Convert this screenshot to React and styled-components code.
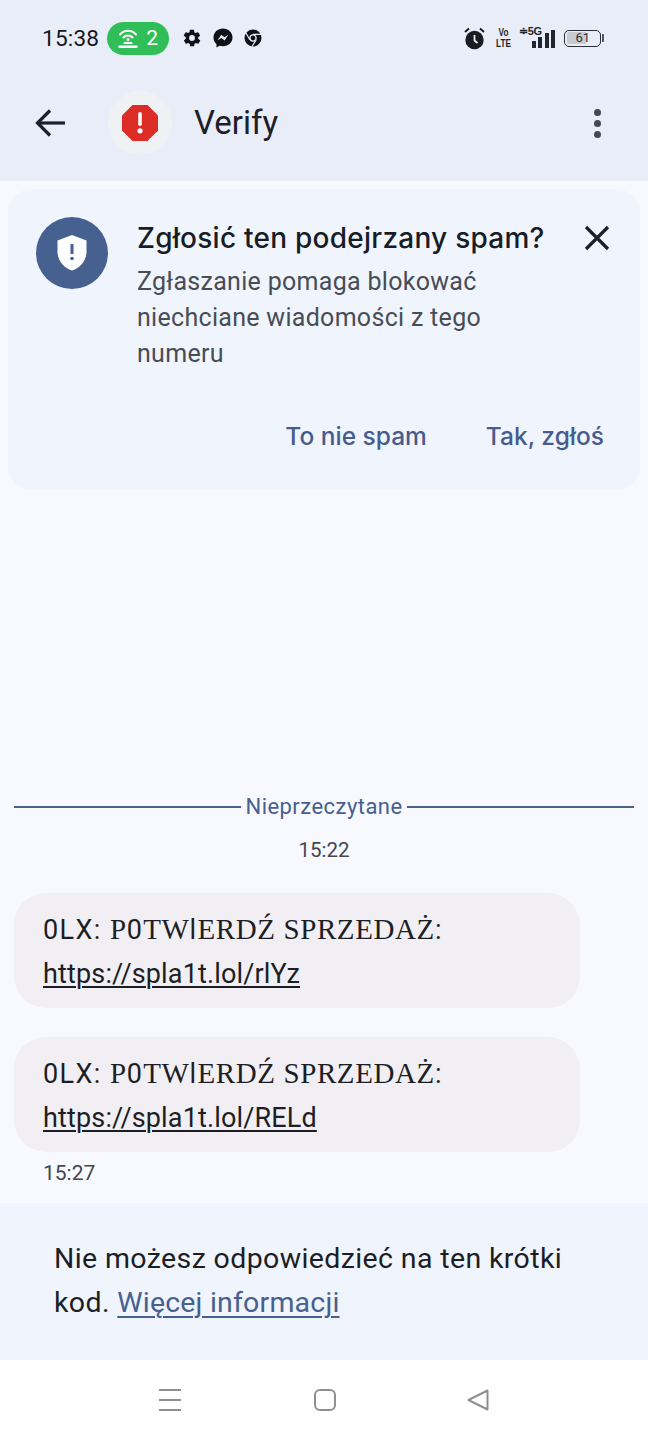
import React from 'react'
import styled, { createGlobalStyle } from 'styled-components'

const GlobalStyle = createGlobalStyle`
  html, body {
    margin: 0;
    padding: 0;
    background: #f7f9ff;
    font-family: 'Roboto', 'Liberation Sans', sans-serif;
  }
`

const Screen = styled.div`
  width: 648px;
  height: 1440px;
  display: flex;
  flex-direction: column;
  overflow: hidden;
  background: #f7f9ff;
`

const Head = styled.header`
  height: 181px;
  flex: none;
  background: #e9edf8;
  display: flex;
  flex-direction: column;
`

const StatusBar = styled.div`
  height: 76px;
  flex: none;
  display: flex;
  align-items: center;
  padding: 0 44px 0 42px;
  color: #14171c;
`

const Clock = styled.span`
  font-size: 22.6px;
  letter-spacing: 0.2px;
  margin-right: 8px;
`

const HotspotPill = styled.div`
  width: 62px;
  height: 33px;
  border-radius: 17px;
  background: #2fbe57;
  color: #fff;
  display: flex;
  align-items: center;
  justify-content: center;
  gap: 8px;
  font-size: 21px;
  margin-right: 13px;
`

const NotifIcons = styled.div`
  display: flex;
  align-items: center;
  gap: 11px;
`

const Spacer = styled.div`
  flex: 1;
`

const SysIcons = styled.div`
  display: flex;
  align-items: center;
`

const VoLte = styled.div`
  width: 14px;
  margin: 0 8px 0 12px;
  display: flex;
  justify-content: center;
  font-family: 'Liberation Sans', sans-serif;
  font-weight: 700;
  font-size: 10.5px;
  line-height: 11.5px;
  text-align: center;
  color: #22252b;
  & > span {
    flex: none;
    transform: scaleX(0.78);
  }
`

const Signal = styled.div`
  position: relative;
  width: 36px;
  height: 20px;
  margin-right: 9px;
  display: flex;
  align-items: flex-end;
  justify-content: flex-end;
  gap: 2.5px;
`

const SignalBar = styled.i`
  display: block;
  width: 4px;
  height: ${(p) => p.$h}px;
  background: #22252b;
`

const FiveG = styled.span`
  position: absolute;
  left: 0;
  top: -3px;
  font-family: 'Liberation Sans', sans-serif;
  font-weight: 700;
  font-size: 11px;
  letter-spacing: -0.3px;
  color: #22252b;
`

const Battery = styled.div`
  display: flex;
  align-items: center;
  gap: 1px;
`

const BatteryBody = styled.div`
  border: 1.5px solid #2c2f35;
  border-radius: 5px;
  padding: 1.5px;
  width: 32px;
  height: 12px;
  display: flex;
`

const BatteryFill = styled.div`
  width: 62%;
  background: #c9cbd0;
  border-radius: 2px 0 0 2px;
  font-size: 13px;
  line-height: 12px;
  color: #2c2f35;
  padding-left: 9px;
  box-sizing: border-box;
  white-space: nowrap;
`

const BatteryTip = styled.div`
  width: 2px;
  height: 8px;
  background: #55585e;
  border-radius: 0 1px 1px 0;
`

const TopBar = styled.div`
  height: 105px;
  flex: none;
  box-sizing: border-box;
  display: flex;
  align-items: flex-start;
  padding: 15px 47px 0 35px;
`

const IconBtn = styled.div`
  height: 64px;
  display: flex;
  align-items: center;
`

const Avatar = styled.div`
  width: 64px;
  height: 64px;
  border-radius: 50%;
  background: #eff1f5;
  display: flex;
  align-items: center;
  justify-content: center;
  margin-left: 43px;
`

const Title = styled.h1`
  flex: 1;
  margin: 0 0 0 22px;
  font-size: 33px;
  line-height: 64px;
  font-weight: 400;
  color: #1c2028;
`

const Dots = styled.div`
  display: flex;
  flex-direction: column;
  gap: 4px;
  height: 64px;
  justify-content: center;
`

const Dot = styled.i`
  width: 7px;
  height: 7px;
  border-radius: 50%;
  background: #454850;
`

const SpamCard = styled.section`
  margin: 8px 8px 0;
  height: 301px;
  box-sizing: border-box;
  background: #f0f4fd;
  border-radius: 24px;
  padding: 28px 30px 0 28px;
  display: flex;
  flex-direction: column;
  flex: none;
`

const CardRow = styled.div`
  display: flex;
  align-items: flex-start;
`

const ShieldBadge = styled.div`
  width: 72px;
  height: 72px;
  flex: none;
  border-radius: 50%;
  background: #46608f;
  display: flex;
  align-items: center;
  justify-content: center;
  margin-right: 29px;
`

const CardText = styled.div`
  flex: 1;
  min-width: 0;
`

const CardTitle = styled.div`
  font-family: 'Inter', 'Roboto', sans-serif;
  font-size: 28px;
  line-height: 43px;
  font-weight: 500;
  letter-spacing: 0.25px;
  color: #181c24;
  white-space: nowrap;
`

const CardBody = styled.p`
  margin: 4px 0 0;
  width: 400px;
  font-size: 25px;
  line-height: 36px;
  letter-spacing: 0.3px;
  color: #484c55;
`

const CloseBtn = styled.div`
  margin-top: 8px;
`

const CardActions = styled.div`
  display: flex;
  justify-content: flex-end;
  gap: 59px;
  margin-top: 44px;
  padding-right: 6px;
`

const ActionBtn = styled.span`
  font-family: 'Inter', 'Roboto', sans-serif;
  font-size: 24.5px;
  line-height: 40px;
  font-weight: 500;
  color: #465c8c;
`

const Chat = styled.main`
  flex: 1;
  display: flex;
  flex-direction: column;
  justify-content: flex-end;
  padding: 0 14px 15px;
`

const Divider = styled.div`
  display: flex;
  align-items: center;
  gap: 4px;
  font-size: 22px;
  letter-spacing: 0.45px;
  color: #46608f;
  &::before,
  &::after {
    content: '';
    flex: 1;
    height: 2px;
    background: #4b6288;
  }
`

const Stamp = styled.div`
  font-size: 20.5px;
  line-height: 30px;
  color: #44474e;
  text-align: center;
  margin: 16px 0 28px;
`

const Bubble = styled.div`
  width: 566px;
  height: 115px;
  box-sizing: border-box;
  padding: 14px 29px;
  border-radius: 32px;
  background: #f1eff4;
  font-size: 27px;
  line-height: 44px;
  letter-spacing: 0.15px;
  color: #1c1e24;
  margin-bottom: 29px;
  white-space: nowrap;
`

const Spoofed = styled.span`
  letter-spacing: 1.4px;
`

const Odd = styled.span`
  font-family: 'Liberation Serif', 'DejaVu Serif', serif;
  font-size: 29px;
  letter-spacing: 0.6px;
`

const MsgLink = styled.a`
  color: inherit;
  text-decoration: underline;
  text-underline-offset: 3px;
  text-decoration-thickness: 2px;
`

const MsgTime = styled.div`
  font-size: 21px;
  line-height: 30px;
  color: #44474e;
  margin: -23px 0 0 29px;
`

const Notice = styled.div`
  height: 157px;
  flex: none;
  box-sizing: border-box;
  background: #f0f4fd;
  padding: 34px 54px 0;
  font-size: 28.5px;
  line-height: 44px;
  letter-spacing: 0.38px;
  color: #1c1e24;
`

const NoticeLink = styled.a`
  color: #46608f;
  letter-spacing: 0.2px;
  text-decoration: underline;
  text-underline-offset: 4px;
  text-decoration-thickness: 2px;
`

const NavBar = styled.nav`
  height: 80px;
  flex: none;
  background: #fff;
  display: flex;
  align-items: flex-start;
  justify-content: space-between;
  padding: 29px 159px 0 158px;
  box-sizing: border-box;
`

function Message({ href }) {
  return (
    <Bubble>
      <Spoofed>
        0LX: <Odd>P</Odd>0<Odd>TW</Odd>l<Odd>ERDŹ SPRZEDAŻ</Odd>:
      </Spoofed>
      <br />
      <MsgLink>{href}</MsgLink>
    </Bubble>
  )
}

export default function App() {
  return (
    <Screen>
      <GlobalStyle />
      <Head>
        <StatusBar>
          <Clock>15:38</Clock>
          <HotspotPill>
            <svg width="20" height="20" viewBox="0 0 20 20" fill="none" stroke="#fff" strokeWidth="2" strokeLinecap="round">
              <path d="M2 6.5C6.5 1.5 13.5 1.5 18 6.5" />
              <path d="M5.5 9.5C8 6.8 12 6.8 14.5 9.5" />
              <circle cx="10" cy="11.5" r="1.5" fill="#fff" stroke="none" />
              <path d="M6.5 15H13.5" />
              <path d="M1.5 18.8H18.5" strokeWidth="2.4" />
            </svg>
            2
          </HotspotPill>
          <NotifIcons>
            <svg width="20" height="20" viewBox="0 0 24 24" fill="#0f1115">
              <path fillRule="evenodd" d="M19.4 13c.1-.3.1-.7.1-1s0-.7-.1-1l2.1-1.6c.2-.2.2-.4.1-.6l-2-3.5c-.1-.2-.4-.3-.6-.2l-2.5 1c-.5-.4-1.1-.7-1.7-1l-.4-2.6c0-.3-.2-.5-.5-.5h-4c-.3 0-.5.2-.5.4l-.4 2.7c-.6.2-1.2.6-1.7 1l-2.5-1c-.2-.1-.5 0-.6.2l-2 3.5c-.1.2-.1.5.1.6L4.6 11c0 .3-.1.7-.1 1s0 .7.1 1l-2.1 1.6c-.2.2-.2.4-.1.6l2 3.5c.1.2.4.3.6.2l2.5-1c.5.4 1.1.7 1.7 1l.4 2.6c0 .3.2.5.5.5h4c.3 0 .5-.2.5-.4l.4-2.7c.6-.2 1.2-.6 1.7-1l2.5 1c.2.1.5 0 .6-.2l2-3.5c.1-.2.1-.5-.1-.6L19.4 13zM12 15.5a3.5 3.5 0 1 1 0-7 3.5 3.5 0 0 1 0 7z" />
            </svg>
            <svg width="20" height="20" viewBox="0 0 20 20">
              <path fill="#0f1115" d="M10 .6C4.6.6.5 4.5.5 9.6c0 2.7 1.1 5 3 6.6v3.2l3-1.6c1.1.3 2.3.5 3.5.5 5.4 0 9.5-3.9 9.5-8.7S15.4.6 10 .6z" />
              <path fill="#e9edf8" d="M4.6 12.3l3.7-5.5 3.1 2.5 3.9-2.5-3.7 5.6-3.1-2.5z" />
            </svg>
            <svg width="18" height="18" viewBox="0 0 18 18" fill="none">
              <circle cx="9" cy="9" r="8.5" fill="#0f1115" />
              <circle cx="9" cy="9" r="3.7" fill="#e9edf8" />
              <circle cx="9" cy="9" r="2.4" fill="#0f1115" />
              <path d="M9 5.3H17M5.8 10.8L2 4M12.2 10.8L8 17.5" stroke="#e9edf8" strokeWidth="1.2" />
            </svg>
          </NotifIcons>
          <Spacer />
          <SysIcons>
            <svg width="21" height="23" viewBox="0 0 21 23">
              <circle cx="10.5" cy="13" r="9.2" fill="#1a1c21" />
              <path d="M10.5 8V13.5L13.5 16" stroke="#e9edf8" strokeWidth="1.8" fill="none" />
              <path d="M1 5L5 1.5M20 5L16 1.5" stroke="#1a1c21" strokeWidth="2" />
            </svg>
            <VoLte>
              <span>
                Vo
                <br />
                LTE
              </span>
            </VoLte>
            <Signal>
              <FiveG>≑5G</FiveG>
              <SignalBar $h={7} />
              <SignalBar $h={11} />
              <SignalBar $h={15} />
              <SignalBar $h={18} />
            </Signal>
            <Battery>
              <BatteryBody>
                <BatteryFill>61</BatteryFill>
              </BatteryBody>
              <BatteryTip />
            </Battery>
          </SysIcons>
        </StatusBar>
        <TopBar>
          <IconBtn>
            <svg width="30" height="28" viewBox="0 0 30 28" fill="none" stroke="#1c2028" strokeWidth="3.2">
              <path d="M30 14H3" />
              <path d="M15 1.5L2.5 14L15 26.5" />
            </svg>
          </IconBtn>
          <Avatar>
            <svg width="36" height="36" viewBox="0 0 36 36">
              <path fill="#db2c25" d="M10.5 0H25.5L36 10.5V25.5L25.5 36H10.5L0 25.5V10.5z" />
              <rect x="16.2" y="7" width="3.6" height="14" rx="1.8" fill="#fff" />
              <circle cx="18" cy="25.8" r="2.6" fill="#fff" />
            </svg>
          </Avatar>
          <Title>Verify</Title>
          <Dots>
            <Dot />
            <Dot />
            <Dot />
          </Dots>
        </TopBar>
      </Head>
      <SpamCard>
        <CardRow>
          <ShieldBadge>
            <svg width="30" height="36" viewBox="0 0 30 36">
              <path fill="#fff" d="M15 0L29.5 5.5V16.5C29.5 25.5 23.5 32.8 15 35.5C6.5 32.8.5 25.5.5 16.5V5.5z" />
              <rect x="13.5" y="9" width="3" height="10" fill="#46608f" />
              <circle cx="15" cy="23.5" r="1.8" fill="#46608f" />
            </svg>
          </ShieldBadge>
          <CardText>
            <CardTitle>Zgłosić ten podejrzany spam?</CardTitle>
            <CardBody>Zgłaszanie pomaga blokować niechciane wiadomości z tego numeru</CardBody>
          </CardText>
          <CloseBtn>
            <svg width="26" height="26" viewBox="0 0 26 26" stroke="#1c2028" strokeWidth="3.2" fill="none">
              <path d="M2 2L24 24M24 2L2 24" />
            </svg>
          </CloseBtn>
        </CardRow>
        <CardActions>
          <ActionBtn>To nie spam</ActionBtn>
          <ActionBtn>Tak, zgłoś</ActionBtn>
        </CardActions>
      </SpamCard>
      <Chat>
        <Divider>Nieprzeczytane</Divider>
        <Stamp>15:22</Stamp>
        <Message href="https://spla1t.lol/rlYz" />
        <Message href="https://spla1t.lol/RELd" />
        <MsgTime>15:27</MsgTime>
      </Chat>
      <Notice>
        Nie możesz odpowiedzieć na ten krótki
        <br />
        kod. <NoticeLink>Więcej informacji</NoticeLink>
      </Notice>
      <NavBar>
        <svg width="24" height="22" viewBox="0 0 24 22" stroke="#8f8f92" strokeWidth="2">
          <path d="M1 1H23M1 11H23M1 21H23" />
        </svg>
        <svg width="22" height="22" viewBox="0 0 22 22" fill="none" stroke="#8f8f92" strokeWidth="2">
          <rect x="1" y="1" width="20" height="20" rx="5" />
        </svg>
        <svg width="22" height="22" viewBox="0 0 22 22" fill="none" stroke="#8f8f92" strokeWidth="2" strokeLinejoin="round">
          <path d="M20.5 1.5V20.5L1.5 11z" />
        </svg>
      </NavBar>
    </Screen>
  )
}
